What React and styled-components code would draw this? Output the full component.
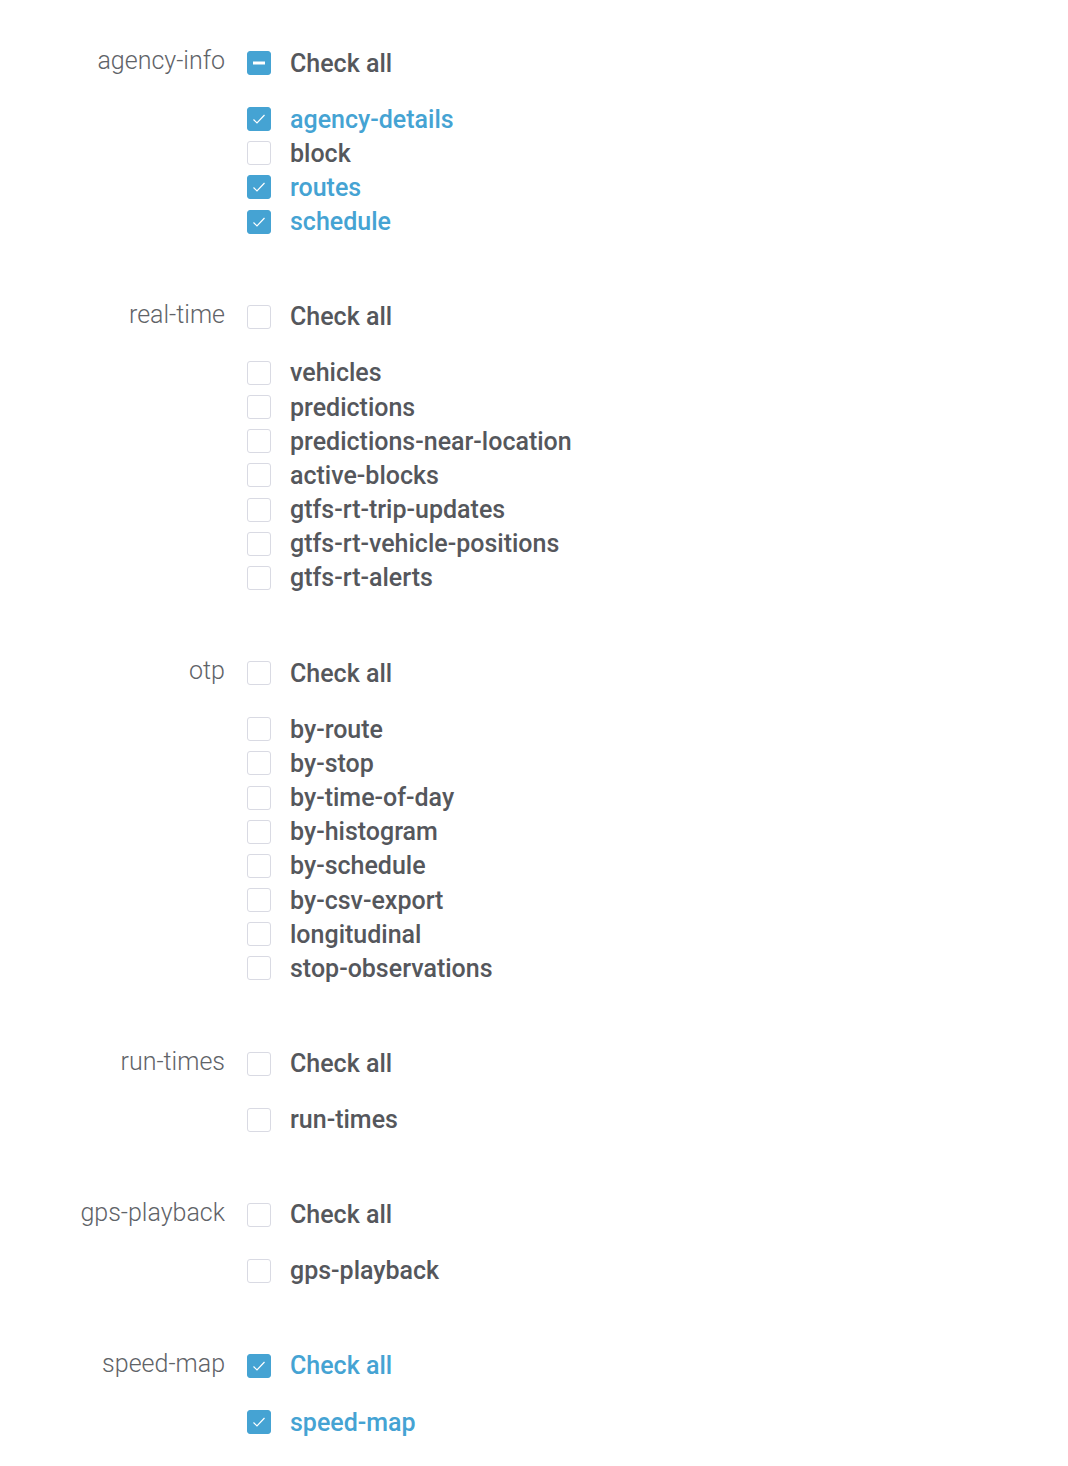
import React from 'react';
import styled, { createGlobalStyle } from 'styled-components';

const GlobalStyle = createGlobalStyle`
  body {
    margin: 0;
    background: #ffffff;
    font-family: Roboto, "Noto Sans", sans-serif;
  }
`;

const Page = styled.div`
  width: 1068px;
  padding: 46px 0 40px;
  display: flex;
  flex-direction: column;
  gap: 61px;
`;

const Group = styled.section`
  display: grid;
  grid-template-columns: 225px 1fr;
  column-gap: 22px;
`;

const GroupLabel = styled.div`
  text-align: right;
  font-size: 25px;
  font-weight: 300;
  color: #5f6368;
  line-height: 30px;
`;

const Options = styled.div`
  display: flex;
  flex-direction: column;
`;

const CheckAllRow = styled.label`
  display: flex;
  align-items: center;
  height: 34px;
  margin-bottom: 22px;
`;

const Row = styled.label`
  display: flex;
  align-items: center;
  height: 34.2px;
`;

const Box = styled.span`
  width: 24px;
  height: 24px;
  box-sizing: border-box;
  border-radius: 3px;
  border: 1px solid ${p => (p.$on ? '#45a3d3' : '#d9dae3')};
  background: ${p => (p.$on ? '#45a3d3' : '#ffffff')};
  display: flex;
  align-items: center;
  justify-content: center;
  flex-shrink: 0;
`;

const Text = styled.span`
  margin-left: 19px;
  font-size: 25px;
  font-weight: 500;
  color: ${p => (p.$on ? '#45a3d3' : '#55575c')};
`;

const Tick = () => (
  <svg width="14" height="12" viewBox="0 0 14 12">
    <path d="M1.5 6.5 L5 10 L12.5 2" fill="none" stroke="#fff" strokeWidth="1.2" />
  </svg>
);

const Dash = () => (
  <svg width="12" height="4" viewBox="0 0 12 4">
    <rect x="0" y="0.5" width="12" height="3" fill="#fff" />
  </svg>
);

const Checkbox = ({ state }) => (
  <Box $on={state !== 'off'}>
    {state === 'on' && <Tick />}
    {state === 'some' && <Dash />}
  </Box>
);

const groups = [
  {
    name: 'agency-info',
    items: [
      ['agency-details', true],
      ['block', false],
      ['routes', true],
      ['schedule', true],
    ],
  },
  {
    name: 'real-time',
    items: [
      ['vehicles', false],
      ['predictions', false],
      ['predictions-near-location', false],
      ['active-blocks', false],
      ['gtfs-rt-trip-updates', false],
      ['gtfs-rt-vehicle-positions', false],
      ['gtfs-rt-alerts', false],
    ],
  },
  {
    name: 'otp',
    items: [
      ['by-route', false],
      ['by-stop', false],
      ['by-time-of-day', false],
      ['by-histogram', false],
      ['by-schedule', false],
      ['by-csv-export', false],
      ['longitudinal', false],
      ['stop-observations', false],
    ],
  },
  { name: 'run-times', items: [['run-times', false]] },
  { name: 'gps-playback', items: [['gps-playback', false]] },
  { name: 'speed-map', items: [['speed-map', true]] },
];

export default function App() {
  return (
    <>
      <GlobalStyle />
      <Page>
        {groups.map(group => {
          const count = group.items.filter(i => i[1]).length;
          const all = count === group.items.length ? 'on' : count > 0 ? 'some' : 'off';
          return (
            <Group key={group.name}>
              <GroupLabel>{group.name}</GroupLabel>
              <Options>
                <CheckAllRow>
                  <Checkbox state={all} />
                  <Text $on={all === 'on'}>Check all</Text>
                </CheckAllRow>
                {group.items.map(([label, on]) => (
                  <Row key={label}>
                    <Checkbox state={on ? 'on' : 'off'} />
                    <Text $on={on}>{label}</Text>
                  </Row>
                ))}
              </Options>
            </Group>
          );
        })}
      </Page>
    </>
  );
}
